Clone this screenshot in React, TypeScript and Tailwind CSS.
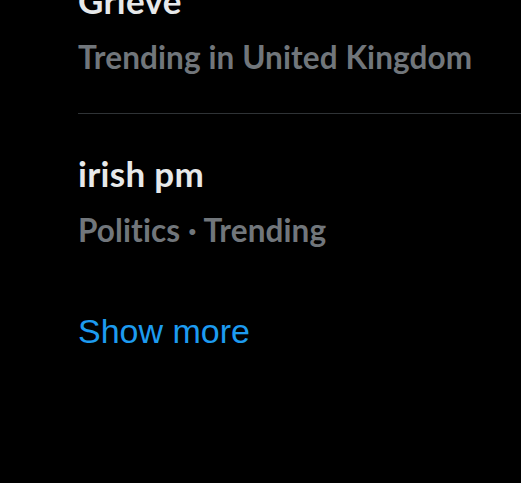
import React from "react";

const trends = [
  { title: "Grieve", meta: "Trending in United Kingdom" },
  { title: "irish pm", meta: "Politics · Trending" },
];

export default function App() {
  return (
    <div className="h-[483px] w-full overflow-hidden bg-black">
      <ul className="-mt-[58px] pl-[78px]">
        {trends.map((t, i) => (
          <li
            key={t.title}
            className={
              i === 0
                ? "border-b border-[#2f3336] pt-[37px] pb-[37px]"
                : "pt-[38px]"
            }
          >
            <div
              className="text-[35px] font-bold leading-[42px] tracking-[0.3px] text-[#e7e9ea]"
              style={{ fontFamily: "Lato, 'Noto Sans', sans-serif" }}
            >
              {t.title}
            </div>
            <div
              className="mt-[17px] text-[31.5px] font-bold leading-[38px] tracking-[0.1px] text-[#71767b]"
              style={{ fontFamily: "Lato, 'Noto Sans', sans-serif" }}
            >
              {t.meta}
            </div>
          </li>
        ))}
      </ul>
      <div className="mt-[62px] pl-[78px]">
        <span
          className="text-[34px] leading-[40px] text-[#1d9bf0]"
          style={{ fontFamily: "'Liberation Sans', Arial, sans-serif" }}
        >
          Show more
        </span>
      </div>
    </div>
  );
}
